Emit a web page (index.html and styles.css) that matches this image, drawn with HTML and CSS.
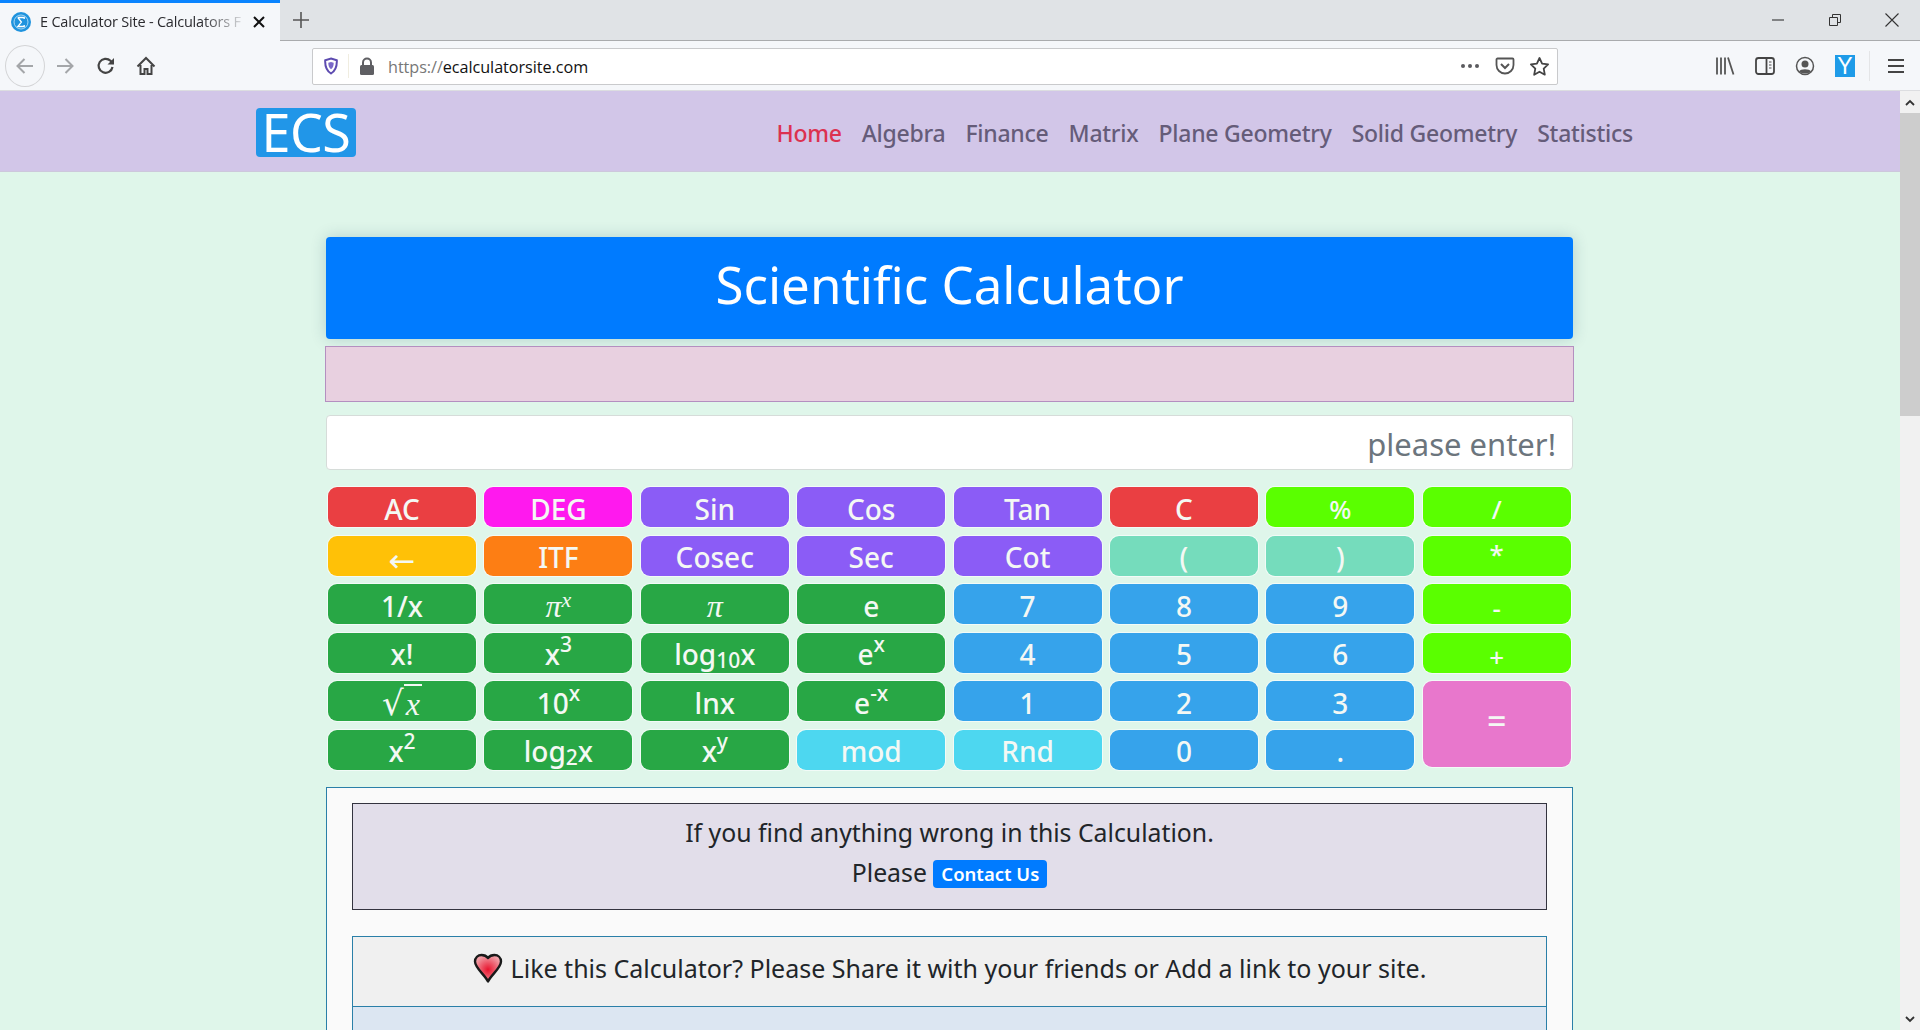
FILE: index.html
```html
<!DOCTYPE html>
<html lang="en">
<head>
    <meta charset="UTF-8">
    <title>E Calculator Site - Calculators</title>
    <link rel="stylesheet" href="styles.css">
</head>
<body>
    <div class="tabstrip">
        <div class="tab">
            <svg class="favicon" width="20" height="20" viewBox="0 0 20 20"><circle cx="10" cy="10" r="10" fill="#1f93de"/><circle cx="10" cy="10" r="7" fill="none" stroke="#a9d8f5" stroke-width="1"/><path d="M6.800 5.500h6.400v1.600M6.800 5.500l3.600 4.600-3.600 4.400h6.400v-1.600" fill="none" stroke="#fff" stroke-width="1.300"/></svg>
            <span class="tab-title">E Calculator Site - Calculators F</span>
            <svg class="tab-close" width="14" height="14" viewBox="0 0 14 14"><path d="M2 2l10 10M12 2L2 12" stroke="#111" stroke-width="2"/></svg>
        </div>
        <div class="new-tab"><svg width="18" height="18" viewBox="0 0 18 18"><path d="M9 1v16M1 9h16" stroke="#555" stroke-width="1.600"/></svg></div>
        <div class="win-controls">
            <div class="win-btn"><svg width="14" height="14" viewBox="0 0 14 14"><path d="M1 7h12" stroke="#222" stroke-width="1"/></svg></div>
            <div class="win-btn"><svg width="14" height="14" viewBox="0 0 14 14"><path d="M1.500 4.500h8v8h-8zM4.500 4.500v-3h8v8h-3" fill="none" stroke="#333" stroke-width="1"/></svg></div>
            <div class="win-btn"><svg width="16" height="16" viewBox="0 0 16 16"><path d="M1.500 1.500l13 13M14.500 1.500l-13 13" stroke="#333" stroke-width="1.100"/></svg></div>
        </div>
    </div>

    <div class="toolbar">
        <div class="tool tool-back"><svg width="20" height="20" viewBox="0 0 20 20"><path d="M18 10H3M9.500 3L2.500 10l7 7" fill="none" stroke="#a4a6a9" stroke-width="2"/></svg></div>
        <div class="tool"><svg width="20" height="20" viewBox="0 0 20 20"><path d="M2 10h15M10.500 3l7 7-7 7" fill="none" stroke="#a4a6a9" stroke-width="2"/></svg></div>
        <div class="tool tool-shift"><svg width="20" height="20" viewBox="0 0 20 20"><path d="M16.500 11a7 7 0 1 1-2-6.200L17 7.500" fill="none" stroke="#444" stroke-width="2.200"/><path d="M18 2v6.500h-6.500z" fill="#444"/></svg></div>
        <div class="tool"><svg width="20" height="20" viewBox="0 0 20 20"><path d="M1.500 10.500L10 2l8.500 8.500M4.500 9v9h4v-5h3v5h4V9" fill="none" stroke="#444" stroke-width="2"/></svg></div>

        <div class="urlbar">
            <svg class="shield" width="14" height="18" viewBox="0 0 14 18"><path d="M7 1.500l5.800 1.700c.3 6-1 10.500-5.800 13.300C2.200 13.700.9 9.200 1.200 3.200z" fill="#fff" stroke="#5d4bb0" stroke-width="2"/><path d="M7 5l2.700.8c0 3-.6 5-2.700 6.400C4.900 10.800 4.300 8.800 4.300 5.800z" fill="#7a68c8"/></svg>
            <div class="url-sep"></div>
            <svg class="lock" width="16" height="19" viewBox="0 0 16 19"><path d="M4 8V5.500a4 4 0 0 1 8 0V8" fill="none" stroke="#5f5f63" stroke-width="2"/><rect x="1" y="8" width="14" height="10" rx="1.500" fill="#5f5f63"/></svg>
            <span class="url"><span class="url-scheme">https://</span>ecalculatorsite.com</span>
            <svg class="dots" width="20" height="6" viewBox="0 0 20 6"><circle cx="3" cy="3" r="2" fill="#5a5a5e"/><circle cx="10" cy="3" r="2" fill="#5a5a5e"/><circle cx="17" cy="3" r="2" fill="#5a5a5e"/></svg>
            <svg class="pocket" width="20" height="20" viewBox="0 0 20 20"><path d="M2.500 2.500h15a1 1 0 0 1 1 1V9a8.500 8.500 0 0 1-17 0V3.500a1 1 0 0 1 1-1z" fill="none" stroke="#555" stroke-width="1.800"/><path d="M6 8l4 4 4-4" fill="none" stroke="#555" stroke-width="2"/></svg>
            <svg class="star" width="21" height="21" viewBox="0 0 21 21"><path d="M10.500 2l2.600 5.600 6 .8-4.400 4.200 1.100 6.100-5.300-3-5.300 3 1.100-6.100L1.900 8.400l6-.8z" fill="none" stroke="#444" stroke-width="1.800" stroke-linejoin="round"/></svg>
        </div>

        <div class="tools-right">
            <div class="tool"><svg width="20" height="20" viewBox="0 0 20 20"><path d="M2 1.500v17M6 1.500v17M10 1.500v17M13 1.500l5.500 17" fill="none" stroke="#555" stroke-width="1.800"/></svg></div>
            <div class="tool"><svg width="20" height="20" viewBox="0 0 20 20"><rect x="1" y="2" width="18" height="16" rx="2.500" fill="none" stroke="#444" stroke-width="1.800"/><path d="M11.500 2v16" stroke="#444" stroke-width="1.800"/><path d="M14 6h2.500M14 9h2.500M14 12h2.500" stroke="#888" stroke-width="1.300"/></svg></div>
            <div class="tool"><svg width="20" height="20" viewBox="0 0 20 20"><circle cx="10" cy="10" r="8.500" fill="none" stroke="#555" stroke-width="1.500"/><circle cx="10" cy="8" r="3.500" fill="#555"/><path d="M4 15.500c1.500-3 10.500-3 12 0-2.500 2.500-9.500 2.500-12 0z" fill="#555"/></svg></div>
            <div class="tool"><span class="yandex">Y</span></div>
            <div class="tool-sep"></div>
            <div class="tool"><svg width="18" height="16" viewBox="0 0 18 16"><path d="M1 2h16M1 8h16M1 14h16" stroke="#444" stroke-width="2"/></svg></div>
        </div>
    </div>

    <div class="viewport">
        <div class="page">
            <div class="navbar">
                <a class="logo">ECS</a>
                <div class="nav-links">
                    <a class="nav-link active">Home</a>
                    <a class="nav-link">Algebra</a>
                    <a class="nav-link">Finance</a>
                    <a class="nav-link">Matrix</a>
                    <a class="nav-link">Plane Geometry</a>
                    <a class="nav-link">Solid Geometry</a>
                    <a class="nav-link">Statistics</a>
                </div>
            </div>

            <div class="container">
                <div class="calc-title">Scientific Calculator</div>
                <div class="calc-expression"></div>
                <div class="calc-input">please enter!</div>

                <div class="keys">
                    <div class="key red">AC</div>
                    <div class="key magenta">DEG</div>
                    <div class="key purple">Sin</div>
                    <div class="key purple">Cos</div>
                    <div class="key purple">Tan</div>
                    <div class="key red">C</div>
                    <div class="key lime">%</div>
                    <div class="key lime">/</div>

                    <div class="key yellow arrow">←</div>
                    <div class="key orange">ITF</div>
                    <div class="key purple">Cosec</div>
                    <div class="key purple">Sec</div>
                    <div class="key purple">Cot</div>
                    <div class="key teal">(</div>
                    <div class="key teal">)</div>
                    <div class="key lime high">*</div>

                    <div class="key green">1/x</div>
                    <div class="key green"><span class="math">π<sup>x</sup></span></div>
                    <div class="key green"><span class="math">π</span></div>
                    <div class="key green">e</div>
                    <div class="key blue">7</div>
                    <div class="key blue">8</div>
                    <div class="key blue">9</div>
                    <div class="key lime low">-</div>

                    <div class="key green">x!</div>
                    <div class="key green">x<sup>3</sup></div>
                    <div class="key green">log<sub>10</sub>x</div>
                    <div class="key green">e<sup>x</sup></div>
                    <div class="key blue">4</div>
                    <div class="key blue">5</div>
                    <div class="key blue">6</div>
                    <div class="key lime low">+</div>

                    <div class="key green"><span class="math"><span class="radical">√</span><span class="radicand">x</span></span></div>
                    <div class="key green">10<sup>x</sup></div>
                    <div class="key green">lnx</div>
                    <div class="key green">e<sup>-x</sup></div>
                    <div class="key blue">1</div>
                    <div class="key blue">2</div>
                    <div class="key blue">3</div>
                    <div class="key pink equals">=</div>

                    <div class="key green">x<sup>2</sup></div>
                    <div class="key green">log<sub>2</sub>x</div>
                    <div class="key green">x<sup>y</sup></div>
                    <div class="key cyan">mod</div>
                    <div class="key cyan">Rnd</div>
                    <div class="key blue">0</div>
                    <div class="key blue">.</div>
                </div>

                <div class="info-panel">
                    <div class="report-box">
                        <p>If you find anything wrong in this Calculation.</p>
                        <p>Please <a class="contact-btn">Contact Us</a></p>
                    </div>
                    <div class="share-box">
                        <div class="share-head">
                            <svg class="heart" width="30" height="30" viewBox="0 0 30 30">
                                <defs><radialGradient id="heartfill" cx="50%" cy="55%" r="55%"><stop offset="0" stop-color="#e8142e"/><stop offset="1" stop-color="#f2a0a8"/></radialGradient></defs>
                                <path d="M15 28.500C12 22 2 15 2 8.500 2 4.500 5 2 8.500 2c3 0 5 1 6.500 3 1.500-2 3.500-3 6.500-3C25 2 28 4.500 28 8.500c0 6.500-10 13.500-13 20z" fill="url(#heartfill)" stroke="#1a1a1a" stroke-width="2.400" stroke-linejoin="round"/>
                            </svg>
                            Like this Calculator? Please Share it with your friends or Add a link to your site.
                        </div>
                        <div class="share-body"></div>
                    </div>
                </div>
            </div>
        </div>

        <div class="scrollbar">
            <div class="scroll-btn"><svg width="10" height="7" viewBox="0 0 10 7"><path d="M1 6l4-4 4 4" fill="none" stroke="#333" stroke-width="1.800"/></svg></div>
            <div class="scroll-thumb"></div>
            <div class="scroll-track"></div>
            <div class="scroll-btn"><svg width="10" height="7" viewBox="0 0 10 7"><path d="M1 1l4 4 4-4" fill="none" stroke="#333" stroke-width="1.800"/></svg></div>
        </div>
    </div>
</body>
</html>
```

FILE: styles.css
```css
* {
    box-sizing: border-box;
}
html, body {
    height: 100%;
}
body {
    margin: 0;
    height: 1030px;
    overflow: hidden;
    display: flex;
    flex-direction: column;
    font-family: "Noto Sans", "Open Sans", sans-serif;
    color: #212529;
}

/* browser chrome */
.tabstrip {
    height: 41px;
    flex: none;
    display: flex;
    background-color: #e0e3e6;
    border-bottom: 1px solid #a9abad;
}
.tab {
    width: 280px;
    height: 41px;
    display: flex;
    align-items: center;
    padding: 0 14px 0 11px;
    background-color: #f5f7fa;
    border-top: 3px solid #0a84ff;
}
.favicon {
    flex: none;
}
.tab-title {
    margin-left: 9px;
    font-family: "Open Sans", sans-serif;
    font-size: 14.500px;
    letter-spacing: -0.2px;
    line-height: 20px;
    white-space: nowrap;
    color: #2a2a2e;
    -webkit-mask-image: linear-gradient(to right, #000 80%, rgba(0, 0, 0, 0.15) 100%);
    mask-image: linear-gradient(to right, #000 80%, rgba(0, 0, 0, 0.15) 100%);
}
.tab-close {
    margin-left: auto;
}
.new-tab {
    width: 42px;
    display: flex;
    align-items: center;
    justify-content: center;
}
.win-controls {
    margin-left: auto;
    display: flex;
}
.win-btn {
    width: 57px;
    display: flex;
    align-items: center;
    justify-content: center;
}
.toolbar {
    height: 50px;
    flex: none;
    display: flex;
    align-items: center;
    padding: 1px 0 0 5px;
    background-color: #f5f7fa;
    border-bottom: 1px solid #dcdde0;
}
.tool {
    width: 40px;
    height: 40px;
    display: flex;
    align-items: center;
    justify-content: center;
}
.tool-back {
    border: 1px solid #d3d4d6;
    border-radius: 50%;
    height: 42px;
}
.tool-shift {
    margin-left: 1px;
}
.urlbar {
    width: 1246px;
    height: 37px;
    margin-left: 146px;
    display: flex;
    align-items: center;
    background-color: #fff;
    border: 1px solid #c9cacc;
    border-radius: 2px;
}
.shield {
    margin-left: 11px;
}
.url-sep {
    width: 1px;
    height: 24px;
    margin-left: 10px;
    background-color: #f0ede0;
}
.lock {
    margin-left: 10px;
}
.url {
    margin-left: 13px;
    padding-top: 2px;
    font-family: "Open Sans", sans-serif;
    font-size: 16.200px;
    letter-spacing: -0.05px;
    color: #111;
}
.url-scheme {
    color: #777;
}
.dots {
    margin-left: auto;
}
.pocket {
    margin-left: 15px;
}
.star {
    margin-left: 14px;
    margin-right: 7px;
}
.tools-right {
    margin-left: 147px;
    display: flex;
    align-items: center;
}
.yandex {
    width: 20px;
    height: 22px;
    background-color: #1e9be8;
    color: #fff;
    font-family: "Liberation Sans", sans-serif;
    font-size: 23px;
    line-height: 22px;
    text-align: center;
}
.tool-sep {
    width: 1px;
    height: 30px;
    margin: 0 6px 0 4px;
    background-color: #e4e5e7;
}

/* page */
.viewport {
    flex: 1;
    min-height: 0;
    display: flex;
}
.page {
    flex: 1;
    min-width: 0;
    overflow: hidden;
    background-color: #dff6ea;
}
.navbar {
    height: 81px;
    display: flex;
    align-items: center;
    justify-content: space-between;
    padding: 0 267px 0 256px;
    background-color: #d2c6e8;
    border-bottom: 1px solid #cdc8dc;
}
.logo {
    width: 100px;
    height: 49px;
    margin-top: 2px;
    background-color: #2196e8;
    border-radius: 4px;
    color: #fff;
    font-size: 52px;
    line-height: 47px;
    text-align: center;
    letter-spacing: -0.5px;
}
.nav-links {
    display: flex;
    gap: 20px;
    margin-top: 4px;
}
.nav-link {
    font-size: 23px;
    font-weight: 500;
    letter-spacing: -0.25px;
    color: #655c79;
}
.nav-link.active {
    color: #dc3150;
}
.container {
    width: 1247px;
    margin: 65px 0 0 326px;
}
.calc-title {
    height: 102px;
    padding-bottom: 8px;
    display: flex;
    align-items: center;
    justify-content: center;
    background-color: #007bff;
    border-radius: 4px;
    box-shadow: 0 0 16px rgba(0, 60, 90, 0.2);
    color: #fff;
    font-size: 51px;
}
.calc-expression {
    position: relative;
    height: 56px;
    margin: 7px -1px 0;
    background-color: #e8d0e0;
    border: 1px solid #b48fc0;
}
.calc-input {
    height: 55px;
    margin-top: 13px;
    padding-right: 16px;
    background-color: #fff;
    border: 1px solid #d6dcd9;
    border-radius: 4px;
    color: #6c757d;
    font-size: 31px;
    line-height: 56px;
    text-align: right;
}
.keys {
    display: grid;
    grid-template-columns: repeat(8, 148px);
    grid-auto-rows: 40px;
    gap: 8.500px 8.400px;
    margin-top: 17px;
    padding-left: 2px;
}
.key {
    display: flex;
    align-items: center;
    justify-content: center;
    padding-top: 3px;
    border-radius: 9px;
    box-shadow: 0 0 0 1px rgba(255, 255, 255, 0.6);
    color: #f4f8f4;
    font-size: 28px;
    font-weight: 500;
    line-height: 1;
    white-space: nowrap;
}
.key sup,
.key sub {
    font-size: 21px;
    line-height: 0;
}
.key sup {
    position: relative;
    top: -10px;
    vertical-align: baseline;
}
.key sub {
    position: relative;
    top: 6px;
    vertical-align: baseline;
}
.math {
    font-family: "Liberation Serif", serif;
    font-style: italic;
    font-weight: 400;
    font-size: 32px;
}
.math sup {
    font-size: 22px;
}
.radical {
    font-family: "DejaVu Sans", sans-serif;
    font-style: normal;
    font-size: 34px;
}
.radicand {
    padding: 0 2px;
    border-top: 2px solid #f4f8f4;
}
.key.arrow {
    padding-top: 10px;
    font-family: "DejaVu Sans", sans-serif;
    font-size: 32px;
}
.key.low {
    padding-top: 8px;
}
.key.high {
    padding-top: 0;
    padding-bottom: 4px;
}
.equals {
    grid-row: span 2;
    height: 86px;
    padding-top: 0;
    padding-bottom: 8px;
    font-size: 34px;
}
.red { background-color: #ea3f42; }
.magenta { background-color: #ff19ee; }
.purple { background-color: #8b5cf6; }
.lime { background-color: #5aff00; font-size: 26px; }
.yellow { background-color: #ffc107; }
.orange { background-color: #fd7e14; }
.teal { background-color: #75dcbc; }
.green { background-color: #28a745; }
.blue { background-color: #36a3eb; }
.pink { background-color: #e877cc; }
.cyan { background-color: #4dd7f0; }

.info-panel {
    margin-top: 17px;
    padding: 15px 25px 0;
    height: 300px;
    background-color: #fafafa;
    border: 1px solid #2a7fa8;
}
.report-box {
    height: 107px;
    padding-top: 8px;
    background-color: #e2deea;
    border: 1px solid #33333f;
    text-align: center;
}
.report-box p {
    margin: 0;
    font-size: 24.800px;
    line-height: 40px;
}
.contact-btn {
    display: inline-block;
    height: 28px;
    padding: 0 8px;
    background-color: #007bff;
    border-radius: 4px;
    color: #fff;
    font-size: 18.500px;
    font-weight: 600;
    line-height: 27px;
    vertical-align: 1px;
}
.share-box {
    margin-top: 26px;
    border: 1px solid #2a7fa8;
}
.share-head {
    height: 70px;
    padding-bottom: 7px;
    display: flex;
    align-items: center;
    justify-content: center;
    gap: 8px;
    background-color: #f0f0f0;
    border-bottom: 1px solid #2a7fa8;
    font-size: 25px;
}
.share-body {
    height: 150px;
    background-color: #dce6f2;
}

/* scrollbar */
.scrollbar {
    width: 20px;
    flex: none;
    display: flex;
    flex-direction: column;
    background-color: #f1f1f1;
}
.scroll-btn {
    height: 22px;
    flex: none;
    display: flex;
    align-items: center;
    justify-content: center;
}
.scroll-thumb {
    height: 303px;
    flex: none;
    background-color: #cdcdcd;
}
.scroll-track {
    flex: 1;
}
```
